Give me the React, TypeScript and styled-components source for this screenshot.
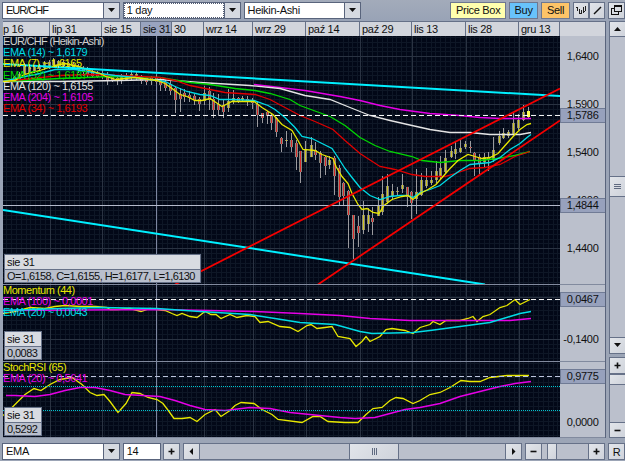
import React from 'react';
import styled, { createGlobalStyle } from 'styled-components';

const GlobalStyle = createGlobalStyle`
  html, body {
    margin: 0;
    padding: 0;
    background: #9ca5b6;
    overflow: hidden;
  }

  * {
    box-sizing: border-box;
  }
`;

const YELLOW = '#e8e800';
const CYAN = '#00dce6';
const RED = '#e00000';
const GREEN = '#00d800';
const WHITE = '#e4e4e4';
const MAGENTA = '#e600e6';

/* ---------- chart data (canvas coordinates) ---------- */

type Candle = [x: number, high: number, low: number, top: number, bottom: number, kind: 'u' | 'd'];

const candles: Candle[] = [
  [14, 76, 82, 77, 80, 'u'], [19, 72, 81, 74, 79, 'u'], [24, 63, 77, 66, 74, 'u'],
  [29, 64, 75, 67, 73, 'u'], [34, 65, 73, 67, 71, 'u'], [39, 64, 71, 65, 69, 'u'],
  [44, 61, 70, 63, 68, 'u'], [49, 60, 69, 62, 67, 'u'], [53, 58, 67, 60, 65, 'u'],
  [58, 60, 68, 61, 66, 'u'], [63, 60, 68, 62, 66, 'u'], [68, 62, 69, 63, 66, 'd'],
  [73, 62, 70, 64, 68, 'd'], [78, 64, 73, 66, 70, 'd'], [83, 66, 76, 68, 72, 'd'],
  [87, 67, 78, 70, 75, 'd'], [92, 70, 78, 71, 76, 'd'], [97, 71, 78, 73, 77, 'd'],
  [102, 70, 79, 73, 77, 'd'], [107, 72, 85, 75, 80, 'd'], [112, 76, 82, 77, 80, 'd'],
  [117, 77, 85, 78, 81, 'd'], [121, 74, 84, 76, 81, 'u'], [126, 73, 81, 75, 80, 'u'],
  [131, 70, 80, 74, 78, 'u'], [136, 72, 80, 74, 78, 'u'], [141, 75, 84, 77, 81, 'd'],
  [146, 77, 85, 78, 82, 'd'], [151, 76, 85, 78, 81, 'd'], [156, 75, 84, 78, 82, 'd'],
  [160, 77, 91, 79, 85, 'd'], [165, 79, 91, 82, 88, 'd'], [170, 81, 95, 84, 91, 'd'],
  [175, 86, 113, 88, 100, 'd'], [180, 88, 112, 94, 99, 'd'], [184, 89, 102, 93, 97, 'd'],
  [189, 91, 102, 95, 98, 'd'], [194, 94, 105, 96, 100, 'd'], [199, 97, 111, 99, 104, 'd'],
  [204, 86, 105, 93, 101, 'u'], [209, 87, 110, 91, 100, 'd'], [213, 93, 118, 99, 110, 'd'],
  [218, 94, 116, 104, 110, 'd'], [223, 99, 118, 105, 112, 'd'], [228, 89, 112, 101, 108, 'u'],
  [233, 90, 104, 98, 101, 'u'], [238, 97, 103, 98, 101, 'd'], [242, 96, 102, 98, 100, 'u'],
  [247, 96, 106, 99, 102, 'd'], [252, 98, 109, 101, 103, 'd'],
  [257, 101, 127, 104, 115, 'd'], [262, 113, 123, 113, 118, 'd'], [267, 111, 124, 112, 116, 'd'],
  [271, 113, 130, 115, 123, 'd'], [276, 117, 137, 118, 132, 'd'], [281, 137, 152, 138, 144, 'd'],
  [286, 131, 147, 140, 141, 'u'], [291, 133, 152, 140, 147, 'd'], [296, 140, 170, 143, 157, 'd'],
  [300, 151, 183, 151, 172, 'd'], [305, 141, 162, 150, 162, 'u'], [311, 137, 157, 145, 157, 'u'],
  [315, 142, 160, 150, 155, 'd'], [320, 151, 178, 153, 163, 'd'], [325, 156, 175, 157, 166, 'd'],
  [329, 156, 169, 160, 165, 'u'], [334, 156, 195, 158, 176, 'd'], [339, 165, 205, 168, 197, 'd'],
  [343, 182, 206, 183, 196, 'd'], [348, 190, 248, 191, 215, 'd'], [353, 215, 259, 215, 239, 'd'],
  [358, 216, 247, 226, 233, 'd'], [363, 201, 234, 215, 230, 'u'], [368, 208, 232, 215, 224, 'u'],
  [372, 207, 235, 218, 222, 'd'], [378, 197, 216, 206, 216, 'u'], [382, 176, 215, 194, 212, 'u'],
  [387, 174, 204, 186, 202, 'u'], [392, 184, 200, 191, 196, 'u'], [397, 187, 195, 191, 192, 'u'],
  [402, 174, 193, 185, 189, 'u'], [407, 187, 207, 187, 197, 'd'], [411, 191, 219, 192, 203, 'd'],
  [416, 169, 214, 192, 199, 'u'], [421, 173, 196, 180, 195, 'u'], [426, 168, 188, 180, 186, 'u'],
  [431, 171, 185, 180, 183, 'u'], [436, 161, 183, 171, 180, 'u'], [440, 156, 180, 168, 177, 'u'],
  [445, 150, 173, 158, 172, 'u'], [451, 146, 158, 151, 157, 'u'], [455, 142, 159, 149, 154, 'u'],
  [460, 140, 153, 148, 152, 'u'], [465, 141, 149, 144, 147, 'u'], [470, 141, 153, 147, 148, 'd'],
  [474, 152, 176, 153, 160, 'd'], [479, 154, 174, 157, 164, 'd'], [484, 153, 167, 157, 162, 'u'],
  [488, 152, 171, 157, 160, 'd'], [493, 137, 162, 150, 160, 'u'], [499, 131, 145, 136, 143, 'u'],
  [503, 128, 139, 133, 138, 'u'], [508, 130, 138, 132, 136, 'u'], [513, 112, 136, 123, 134, 'u'],
  [518, 114, 130, 120, 128, 'u'], [523, 105, 121, 112, 120, 'u'], [528, 107, 118, 111, 117, 'u'],
];

const ema204 = '254,84 280,87 305,90 340,96 360,100 380,105 400,109 430,113 460,115 480,117 500,118 531,118';
const ema120 = '3,81 60,81 120,80 160,79 200,82 250,85 280,88 305,95 330,99 350,107 370,115 390,120 412,125 430,129 450,132 470,132 490,134 520,134 531,132';
const ema52 = '3,81 60,78 110,76 160,77 190,82 210,84 235,88 255,90 270,93 290,99 300,105 330,116 345,125 360,137 375,145 390,151 412,156 422,160 440,162 460,160 480,160 497,158 515,155 530,151';
const ema34 = '3,81 60,75 90,74 120,75 160,77 175,80 190,85 205,88 225,92 255,94 270,99 285,107 300,115 315,121 333,129 345,140 360,153 380,166 395,169 412,174 425,176 445,176 455,173 470,168 485,167 500,164 515,156 530,151';
const ema14 = '3,81 20,77 40,73 55,69 75,69 100,73 115,75 135,77 157,80 165,81 175,86 187,91 200,94 210,95 220,99 232,99 254,100 268,105 275,109 285,117 295,127 302,136 312,138 320,142 332,148 338,157 345,168 352,177 360,187 370,195 380,199 390,196 400,195 408,195 413,197 420,192 430,189 440,185 450,177 460,170 470,164 480,163 490,162 500,157 510,149 520,143 527,137 531,134';
const ema7 = '3,81 15,80 24,74 40,70 55,65 65,63 78,66 90,70 100,73 106,76 116,79 125,78 135,77 150,79 157,80 165,83 172,88 180,94 187,96 195,100 202,100 210,98 216,102 222,106 232,101 245,101 254,101 262,107 273,114 282,124 292,130 298,140 303,149 315,150 322,154 333,158 336,166 342,176 348,183 352,193 358,204 362,209 367,208 373,212 379,213 384,205 392,199 402,196 408,195 413,199 420,193 428,189 436,184 443,176 450,168 458,160 468,154 475,156 482,158 490,157 498,153 506,144 514,135 520,129 527,124 531,123';

const momentum = '3,313 15,311 30,307 45,308 55,306 65,305 80,306 95,306 107,307 110,309 118,309 130,308 141,311 150,308 157,309 165,310 172,313 177,315 182,313 190,316 197,317 205,311 211,314 216,314 221,318 230,314 237,317 247,315 255,316 260,322 268,321 280,326 290,327 298,331 307,325 311,324 317,328 325,327 332,326 338,336 350,338 356,346 362,341 366,336 370,341 380,336 386,329 392,328 405,330 413,333 420,327 430,324 433,321 440,324 446,320 460,320 468,318 473,316 477,321 483,316 490,314 500,307 507,305 515,299 520,304 526,301 530,299';
const momentumEma100 = '3,310 157,309 210,310 255,311 300,313 340,315 370,318 410,320 510,320 531,318';
const momentumEma20 = '3,310 60,308 100,307 157,308 200,311 250,314 275,318 300,322 335,324 360,331 372,333 413,332 430,330 460,326 490,322 510,316 520,313 531,311';

const stoch = '3,415 12,407 25,394 34,388 41,390 50,384 60,379 72,377 82,384 90,392 97,395 104,394 110,401 118,412 126,403 132,392 140,393 148,397 157,399 163,403 169,411 174,418 182,418 190,417 197,421 205,414 215,409 221,416 230,410 235,405 241,402 254,403 262,409 272,414 278,419 302,422 313,416 320,416 328,421 345,422 358,422 366,414 373,408 382,407 390,400 396,397 403,398 413,403 420,400 430,394 440,392 450,387 461,380 470,381 480,381 490,377 507,375 529,375';
const stochEma20 = '6,395 15,395 35,396 50,394 65,390 80,387 95,387 110,390 125,394 160,396 175,400 190,405 205,409 225,410 250,407 270,408 290,412 310,414 340,417 355,418 375,417 390,413 405,409 420,407 440,403 460,396 480,391 500,386 515,383 531,381';

const majorX = [50, 102, 156, 204, 253, 306, 360, 412, 466, 519];
const minorX = Array.from({ length: 114 }, (_, i) => Math.round(6 + i * 4.88));

const dates = [
  { label: 'p 16', width: 47 },
  { label: 'lip 31', width: 52 },
  { label: 'sie 15', width: 39 },
  { label: 'sie 31', width: 31, active: true },
  { label: '30', width: 32 },
  { label: 'wrz 14', width: 49 },
  { label: 'wrz 29', width: 53 },
  { label: 'paź 14', width: 54 },
  { label: 'paź 29', width: 52 },
  { label: 'lis 13', width: 54 },
  { label: 'lis 28', width: 53 },
  { label: 'gru 13', width: 41 },
];

/* ---------- styled parts ---------- */

const Window = styled.div`
  width: 625px;
  height: 461px;
  display: flex;
  flex-direction: column;
  background: linear-gradient(#a3abba 0, #99a3b6 20px, #9ca5b6 100%);
  font-family: 'Liberation Sans', Arial, sans-serif;
  font-size: 11px;
  letter-spacing: -0.3px;
  color: #101010;
  overflow: hidden;
  white-space: nowrap;
`;

const Toolbar = styled.div<{ $bottom?: boolean }>`
  display: flex;
  width: 625px;
  height: ${p => (p.$bottom ? 23 : 21)}px;
  padding: ${p => (p.$bottom ? '5px 0 0 2px' : '2px 0 0 2px')};
`;

const Select = styled.div`
  display: flex;
  width: 118px;
  height: 17px;
  margin-right: 3px;
  border: 1px solid #59647c;
  background: #fff;
`;

const SelectValue = styled.div<{ $focused?: boolean; $tight?: boolean }>`
  flex: 1;
  padding-left: ${p => (p.$focused ? 2 : 3)}px;
  border: ${p => (p.$focused ? '1px dotted #505a70' : '0')};
  line-height: ${p => (p.$focused ? 13 : 15)}px;
  letter-spacing: ${p => (p.$tight ? '-1px' : 'inherit')};
`;

const SelectArrow = styled.div`
  display: flex;
  align-items: center;
  justify-content: center;
  width: 16px;
  border-left: 1px solid #59647c;
  background: #d6dae1;
`;

const Spacer = styled.div<{ $size: number }>`
  flex: none;
  width: ${p => p.$size}px;
  height: ${p => p.$size}px;
`;

const ActionButton = styled.div<{ $bg: string; $w: number }>`
  width: ${p => p.$w}px;
  height: 17px;
  margin-right: 3px;
  border: 1px solid #6e7890;
  background: ${p => p.$bg};
  line-height: 15px;
  text-align: center;
`;

const Button = styled.div<{ $w?: number; $h?: number }>`
  flex: none;
  display: flex;
  align-items: center;
  justify-content: center;
  width: ${p => p.$w ?? 17}px;
  height: ${p => p.$h ?? 17}px;
  border: 1px solid #667188;
  background: linear-gradient(135deg, #e2e5ea, #cfd3db);
`;

const Body = styled.div`
  display: flex;
  height: 417px;
`;

const ChartFrame = styled.div`
  width: 603px;
  margin-left: 3px;
  border-right: 1px solid #59647c;
`;

const DateAxis = styled.div`
  display: flex;
  height: 15px;
  border-top: 1px solid #667188;
  background: #d2d5dc;
`;

const DateCell = styled.div<{ $w: number; $active?: boolean }>`
  width: ${p => p.$w}px;
  padding-left: 2px;
  border-right: 1px solid #667188;
  line-height: 14px;
  background: ${p => (p.$active ? '#99a4bf' : 'transparent')};

  &:first-child {
    padding-left: 0;
  }
`;

const Pane = styled.div<{ $h: number }>`
  position: relative;
  display: flex;
  height: ${p => p.$h}px;
`;

const Legend = styled.div`
  position: absolute;
  left: 0;
  top: 0;
  display: flex;
  flex-direction: column;
`;

const LegendRow = styled.span<{ $color: string; $tight?: boolean }>`
  height: 11.2px;
  line-height: 11px;
  letter-spacing: ${p => (p.$tight ? -0.68 : -0.46)}px;
  color: ${p => p.$color};
`;

const Readout = styled.div<{ $w: number }>`
  position: absolute;
  left: 1px;
  bottom: 1px;
  width: ${p => p.$w}px;
  border: 1px solid #667188;
`;

const ReadoutRow = styled.div<{ $shade?: boolean }>`
  height: 14px;
  padding-left: 2px;
  line-height: 14px;
  letter-spacing: ${p => (p.$shade ? -0.56 : -0.3)}px;
  background: ${p => (p.$shade ? '#b9bfcc' : '#d8dbe1')};

  & + & {
    height: 13px;
    border-top: 1px solid #667188;
    line-height: 13px;
  }
`;

const SideBar = styled.div`
  display: flex;
  flex-direction: column;
  width: 17px;
  margin-left: 3px;
`;

const VTrack = styled.div<{ $h: number }>`
  height: ${p => p.$h}px;
  border-left: 1px solid #667188;
  background: #bbc0cc;
`;

const HTrack = styled.div<{ $w: number }>`
  width: ${p => p.$w}px;
  height: 17px;
  border-top: 1px solid #667188;
  border-bottom: 1px solid #667188;
  background: #bbc0cc;
`;

const NumberField = styled.div`
  width: 38px;
  height: 17px;
  margin-right: 2px;
  padding-left: 3px;
  border: 1px solid #59647c;
  background: #fff;
  line-height: 15px;
`;

const Border = styled.div`
  height: 1px;
  background: #818a9e;
`;

/* ---------- icons ---------- */

const arrows = {
  down: 'M1 2h7L4.5 6z',
  up: 'M1 6h7L4.5 2z',
  left: 'M6 1v7L2.5 4.5z',
  right: 'M3 1v7l3.5-3.5z',
};

const Arrow = ({ dir }: { dir: keyof typeof arrows }) => (
  <svg width="9" height="9" viewBox="0 0 9 9"><path d={arrows[dir]} fill="#101010" /></svg>
);

const Sign = ({ plus }: { plus?: boolean }) => (
  <svg width="7" height="7" viewBox="0 0 7 7">
    <path d={plus ? 'M.5 3.5h6M3.5 .5v6' : 'M.5 3.5h6'} stroke="#101010" strokeWidth="1.6" />
  </svg>
);

const Grip = ({ vertical }: { vertical?: boolean }) => (
  <svg width="9" height="9" viewBox="0 0 9 9" shapeRendering="crispEdges">
    <path
      d={vertical ? 'M1 2.5h7M1 4.5h7M1 6.5h7' : 'M2.5 1v7M4.5 1v7M6.5 1v7'}
      stroke="#5f6a80"
      strokeWidth="1"
    />
  </svg>
);

interface DropdownProps {
  value: string;
  focused?: boolean;
  tight?: boolean;
}

const Dropdown = ({ value, focused, tight }: DropdownProps) => (
  <Select>
    <SelectValue $focused={focused} $tight={tight}>{value}</SelectValue>
    <SelectArrow><Arrow dir="down" /></SelectArrow>
  </Select>
);

/* ---------- chart ---------- */

interface PlotProps {
  top: number;
  height: number;
  rows: number[];
  children: React.ReactNode;
}

const Plot = ({ top, height, rows, children }: PlotProps) => {
  const minorY = Array.from({ length: Math.ceil(height / 4.8) }, (_, i) => Math.round(top + 1 + i * 4.8));
  return (
    <svg width="557" height={height} viewBox={`3 ${top} 557 ${height}`}>
      <rect x="3" y={top} width="557" height={height} fill="#020817" />
      <g shapeRendering="crispEdges" strokeWidth="1">
        <path d={minorX.map(x => `M${x}.5 ${top}v${height}`).join('')} stroke="#0e1726" />
        <path d={minorY.map(y => `M3 ${y}.5h557`).join('')} stroke="#0e1726" />
        <path d={majorX.map(x => `M${x}.5 ${top}v${height}`).join('')} stroke="#2a3342" />
        <path d={rows.map(y => `M3 ${y}.5h557`).join('')} stroke="#2a3342" />
        <path d={`M156.5 ${top}v${height}`} stroke="#7d86a0" />
      </g>
      {children}
    </svg>
  );
};

const Curve = ({ points, color, width = 1.3 }: { points: string; color: string; width?: number }) => (
  <polyline points={points} transform="translate(0 .5)" fill="none" stroke={color} strokeWidth={width} />
);

const Level = ({ y, color = '#f4f4f4' }: { y: number; color?: string }) => (
  <path d={`M3 ${y}.5h557`} stroke={color} strokeWidth="1" strokeDasharray="5 3" shapeRendering="crispEdges" />
);

interface ScaleProps {
  top: number;
  height: number;
  ticks: [number, string][];
  tags: [number, string][];
}

const Scale = ({ top, height, ticks, tags }: ScaleProps) => (
  <svg width="45" height={height} viewBox={`560 ${top} 45 ${height}`} fontSize="11" fill="#101010">
    <rect x="560" y={top} width="45" height={height} fill="#bbc0cc" />
    {ticks.map(([y, label]) => (
      <text key={label} x="598.5" y={y + 4} textAnchor="end">{label}</text>
    ))}
    {tags.map(([y, label]) => (
      <g key={label}>
        <rect x="560.5" y={y - 6.5} width="45" height="14" fill="#97a1bc" stroke="#707b95" />
        <text x="598.5" y={y + 4} textAnchor="end">{label}</text>
      </g>
    ))}
  </svg>
);

const App: React.FC = () => {
  return (
    <Window>
      <GlobalStyle />
      <Toolbar>
        <Dropdown value="EUR/CHF" tight />
        <Dropdown value="1 day" focused />
        <Dropdown value="Heikin-Ashi" />
        <Spacer $size={86} />
        <ActionButton $bg="#ffffae" $w={56}>Price Box</ActionButton>
        <ActionButton $bg="#68c3fb" $w={29}>Buy</ActionButton>
        <ActionButton $bg="#fdc468" $w={29}>Sell</ActionButton>
        <Button $w={16}>
          <svg width="11" height="11" viewBox="0 0 11 11" shapeRendering="crispEdges">
            <path d="M1.5 2v4M3.5 4v5M5.5 5v4M7.5 2v6M9.5 1v5M0 2.5h1M4 8.5h1M8 6.5h1" stroke="#202020" />
          </svg>
        </Button>
        <Button $w={16}>
          <svg width="9" height="9" viewBox="0 0 9 9"><path d="M1 8L8 1" stroke="#101010" strokeWidth="1.5" /></svg>
        </Button>
        <Spacer $size={3} />
        <Button>
          <svg width="11" height="11" viewBox="0 0 11 11" fill="none" stroke="#101010" shapeRendering="crispEdges">
            <path d="M3.5 .5h7v6h-7zM3.5 1.5h7M3 3.5H.5v6h7V7" />
          </svg>
        </Button>
      </Toolbar>

      <Body>
        <ChartFrame>
          <DateAxis>
            {dates.map(d => (
              <DateCell key={d.label} $w={d.width} $active={d.active}>{d.label}</DateCell>
            ))}
          </DateAxis>

          <Pane $h={248}>
            <Plot top={36} height={248} rows={[56, 104, 152, 200, 248]}>
              <g shapeRendering="crispEdges">
                {candles.map(([x, high, low, top, bottom, kind]) => (
                  <g key={x}>
                    <path d={`M${x + 0.5} ${high}V${low}`} stroke="#9a9a9e" />
                    <rect x={x - 1} y={top} width="3" height={Math.max(1, bottom - top)} fill="#88867e" />
                    <rect x={x} y={top} width="1" height={Math.max(1, bottom - top)} fill={kind === 'u' ? '#ccc420' : '#d82828'} />
                  </g>
                ))}
                <rect x="527" y="111" width="3" height="6" fill="#ffff50" />
              </g>
              <Curve points={ema204} color={MAGENTA} width={1.5} />
              <Curve points={ema120} color={WHITE} />
              <Curve points={ema52} color={GREEN} />
              <Curve points={ema34} color={RED} />
              <Curve points={ema14} color={CYAN} />
              <Curve points={ema7} color={YELLOW} />
              <Level y={115} />
              <path d="M3 205.5h557" stroke="#b4bacb" shapeRendering="crispEdges" />
              <Curve points="3,63.5 560,95.5" color="#00f0ff" width={2} />
              <Curve points="3,209.5 485,284" color="#00f0ff" width={2} />
              <Curve points="175,284 560,88" color="#f40000" width={1.8} />
              <Curve points="318,284 560,120" color="#f40000" width={1.8} />
            </Plot>
            <Scale
              top={36}
              height={248}
              ticks={[[56, '1,6400'], [104, '1,5900'], [152, '1,5400'], [200, '1,4900'], [248, '1,4400']]}
              tags={[[115, '1,5786'], [205, '1,4844']]}
            />
            <Legend>
              <LegendRow $color="#d0d0d0" $tight>EUR/CHF (Heikin-Ashi)</LegendRow>
              <LegendRow $color={CYAN}>EMA (14) ~ 1,6179</LegendRow>
              <LegendRow $color={YELLOW}>EMA (7) ~ 1,6165</LegendRow>
              <LegendRow $color={GREEN}>EMA (52) ~ 1,6187</LegendRow>
              <LegendRow $color={WHITE}>EMA (120) ~ 1,6155</LegendRow>
              <LegendRow $color={MAGENTA}>EMA (204) ~ 1,6105</LegendRow>
              <LegendRow $color={RED}>EMA (34) ~ 1,6193</LegendRow>
            </Legend>
            <Readout $w={197}>
              <ReadoutRow>sie 31</ReadoutRow>
              <ReadoutRow $shade>O=1,6158, C=1,6155, H=1,6177, L=1,6130</ReadoutRow>
            </Readout>
          </Pane>
          <Border />

          <Pane $h={76}>
            <Plot top={285} height={76} rows={[297, 339]}>
              <Curve points={momentum} color={YELLOW} />
              <Curve points={momentumEma100} color={MAGENTA} width={1.5} />
              <Curve points={momentumEma20} color={CYAN} width={1.5} />
              <Level y={299} />
            </Plot>
            <Scale top={285} height={76} ticks={[[339, '-0,1400']]} tags={[[299, '0,0467']]} />
            <Legend>
              <LegendRow $color={YELLOW}>Momentum (44)</LegendRow>
              <LegendRow $color={MAGENTA}>EMA (100) ~ 0,0001</LegendRow>
              <LegendRow $color={CYAN}>EMA (20) ~ 0,0043</LegendRow>
            </Legend>
            <Readout $w={38}>
              <ReadoutRow>sie 31</ReadoutRow>
              <ReadoutRow $shade>0,0083</ReadoutRow>
            </Readout>
          </Pane>
          <Border />

          <Pane $h={75}>
            <Plot top={362} height={75} rows={[]}>
              <Curve points={stoch} color={YELLOW} />
              <Curve points={stochEma20} color={MAGENTA} width={1.5} />
              <path
                d="M3 386.5h557M3 410.5h557"
                stroke="#00c4d0"
                strokeDasharray="1 1"
                shapeRendering="crispEdges"
              />
              <Level y={376} color="#bcc4dc" />
            </Plot>
            <Scale top={362} height={75} ticks={[[422, '0,0000']]} tags={[[376, '0,9775']]} />
            <Legend>
              <LegendRow $color={YELLOW}>StochRSI (65)</LegendRow>
              <LegendRow $color={MAGENTA}>EMA (20) ~ 0,5641</LegendRow>
            </Legend>
            <Readout $w={38}>
              <ReadoutRow>sie 31</ReadoutRow>
              <ReadoutRow $shade>0,5292</ReadoutRow>
            </Readout>
          </Pane>
          <Border />
        </ChartFrame>

        <SideBar>
          <Button $h={16}><Arrow dir="up" /></Button>
          <VTrack $h={140} />
          <Button $h={21}><Grip vertical /></Button>
          <VTrack $h={141} />
          <Button $h={17}><Arrow dir="down" /></Button>
          <Spacer $size={3} />
          <Button $h={17}><Sign plus /></Button>
          <Button $h={11} />
          <VTrack $h={37} />
          <Button $h={16}><Sign /></Button>
        </SideBar>
      </Body>

      <Toolbar $bottom>
        <Dropdown value="EMA" />
        <NumberField>14</NumberField>
        <Button><Sign plus /></Button>
        <Spacer $size={3} />
        <Button><Arrow dir="left" /></Button>
        <HTrack $w={150} />
        <Button $w={50}><Grip /></Button>
        <HTrack $w={106} />
        <Button><Arrow dir="right" /></Button>
        <Spacer $size={3} />
        <Button><Sign /></Button>
        <HTrack $w={5} />
        <Button $w={10} />
        <HTrack $w={31} />
        <Button><Sign plus /></Button>
        <Spacer $size={3} />
        <Button>R</Button>
      </Toolbar>
    </Window>
  );
};

export default App;
